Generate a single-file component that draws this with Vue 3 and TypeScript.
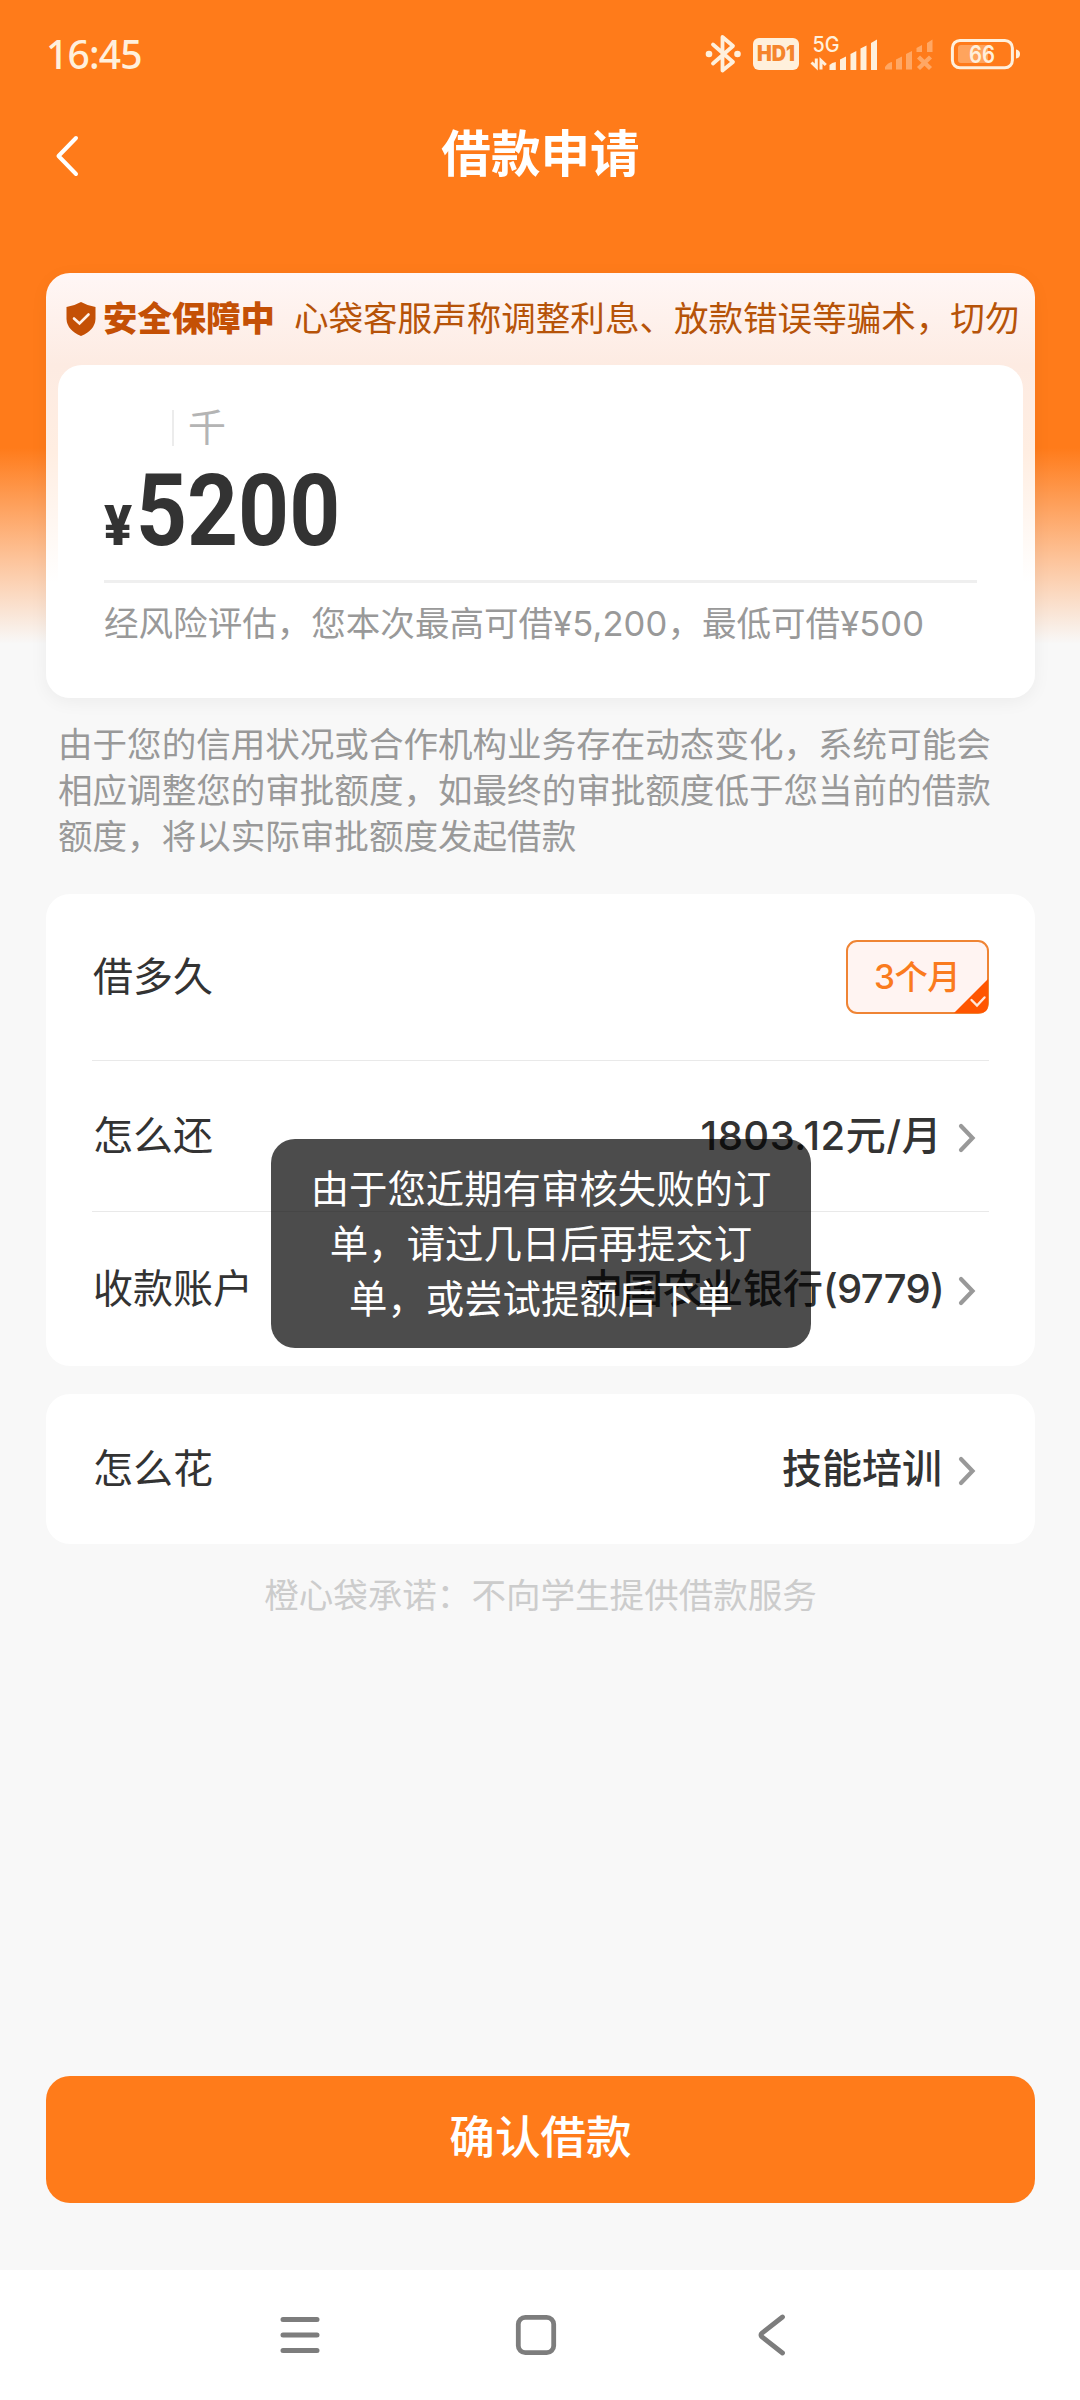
<script setup lang="ts">
interface Row {
  label: string
  value: string
  detail?: string
}

const tip =
  '由于您的信用状况或合作机构业务存在动态变化，系统可能会相应调整您的审批额度，如最终的审批额度低于您当前的借款额度，将以实际审批额度发起借款'
const loanRows: Row[] = [
  { label: '怎么还', value: '1803.12元/月' },
  { label: '收款账户', value: '中国农业银行', detail: '(9779)' },
]
const toastLines: string[] = ['由于您近期有审核失败的订', '单，请过几日后再提交订', '单，或尝试提额后下单']
</script>

<template>
  <div class="screen">
    <header class="status">
      <span class="clock">16:45</span>
      <svg class="status-icons" width="330" height="50" viewBox="700 30 330 50">
        <g fill="none" stroke="#fff0dc" stroke-width="3.8" stroke-linejoin="round" stroke-linecap="round">
          <path d="M713 44.5 L733 62 L722.5 70.5 V37 L733 46 L713 63.5" />
        </g>
        <circle cx="709" cy="54" r="3.3" fill="#fff0dc" />
        <circle cx="737.5" cy="54" r="3.3" fill="#fff0dc" />
        <rect x="753" y="38" width="46" height="32" rx="6" fill="#fff0dc" />
        <text x="776" y="61.3" class="hd" text-anchor="middle" textLength="38" lengthAdjust="spacingAndGlyphs">HD1</text>
        <text x="812.5" y="52" class="net" textLength="27" lengthAdjust="spacingAndGlyphs">5G</text>
        <g fill="none" stroke="#fff0dc" stroke-width="3">
          <path d="M816.3 58.5 V67 L811.5 62.5" />
          <path d="M821 69.5 V60.5 L825.8 65" />
        </g>
        <g fill="#fff0dc">
          <path d="M829.5 65 Q832 62.5 835.8 62 V70 H829.5Z" />
          <path d="M840 59.5 L846 56.5 V70 H840Z" />
          <path d="M850.5 54 L856.3 51 V70 H850.5Z" />
          <path d="M860.5 48.5 L866.5 45.5 V70 H860.5Z" />
          <path d="M871 43 L877 39.5 V70 H871Z" />
        </g>
        <g fill="#fff0dc" opacity=".38">
          <path d="M885 67 Q888 62.5 892 62 V69.5 H885Z" />
          <path d="M896 59.5 L902 56.5 V69.5 H896Z" />
          <path d="M906 54 L912 51 V69.5 H906Z" />
          <path d="M916.5 48 L922 45 V52 H916.5Z" />
          <path d="M927 43 L932.5 39.5 V52 H927Z" />
          <path d="M918.5 57 L930.5 68.5 M930.5 57 L918.5 68.5" stroke="#fff0dc" stroke-width="4.4" />
        </g>
        <rect x="952.4" y="40.4" width="60" height="27.4" rx="7.5" fill="none" stroke="#fff0dc" stroke-width="3" />
        <path d="M961 45 H988 V63 H961 Q958 63 958 60 V48 Q958 45 961 45Z" fill="#fff0dc" opacity=".35" />
        <path d="M1016 49.5 Q1020 50 1020 54 Q1020 58 1016 58.5Z" fill="#fff0dc" />
        <text x="982" y="63" class="battery" text-anchor="middle" textLength="26" lengthAdjust="spacingAndGlyphs">66</text>
      </svg>
    </header>

    <nav class="navbar">
      <svg class="back" width="24" height="42" viewBox="0 0 24 42">
        <path d="M21 3 L3.5 21 L21 39" fill="none" stroke="#fff" stroke-width="4" stroke-linecap="round" stroke-linejoin="round" />
      </svg>
      <h1>借款申请</h1>
    </nav>

    <main>
      <section class="quota">
        <div class="safety">
          <svg width="30" height="36" viewBox="0 0 30 36">
            <path d="M15 1 Q22 5 29.5 6 V18 Q29 29 15 35 Q1 29 .5 18 V6 Q8 5 15 1Z" fill="#c45005" />
            <path d="M8 17.5 L13.5 22.5 L22.5 13.5" fill="none" stroke="#fff1e8" stroke-width="2.6" stroke-linecap="round" />
          </svg>
          <strong>安全保障中</strong>
          <span class="marquee">心袋客服声称调整利息、放款错误等骗术，切勿</span>
        </div>
        <div class="amount-card">
          <div class="unit"><i></i><span>千</span></div>
          <div class="amount"><span class="yen">¥</span><span class="digits">5200</span></div>
          <p class="range">经风险评估，您本次最高可借<span>¥5,200</span>，最低可借<span>¥500</span></p>
        </div>
      </section>

      <p class="tip">{{ tip }}</p>

      <section class="card">
        <div class="row term">
          <span class="label">借多久</span>
          <div class="chip">
            3个月
            <svg class="corner" width="34" height="34" viewBox="0 0 34 34">
              <path d="M34 0 V26 Q34 34 26 34 H0Z" fill="#ff5500" />
              <path d="M17.5 21 L23 26.5 L30.5 18.5" fill="none" stroke="#ffe6d8" stroke-width="2.4" stroke-linecap="round" />
            </svg>
          </div>
        </div>
        <div v-for="row in loanRows" :key="row.label" class="row">
          <span class="label">{{ row.label }}</span>
          <span class="value" :class="{ plain: !row.detail }">{{ row.value }}<span v-if="row.detail" class="detail">{{ row.detail }}</span></span>
          <svg class="chevron" width="18" height="30" viewBox="0 0 18 30">
            <path d="M3 3 L14.5 15 L3 27" fill="none" stroke="#999" stroke-width="4.2" stroke-linecap="round" />
          </svg>
        </div>
      </section>

      <section class="card usage">
        <div class="row">
          <span class="label">怎么花</span>
          <span class="value">技能培训</span>
          <svg class="chevron" width="18" height="30" viewBox="0 0 18 30">
            <path d="M3 3 L14.5 15 L3 27" fill="none" stroke="#999" stroke-width="4.2" stroke-linecap="round" />
          </svg>
        </div>
      </section>

      <p class="promise">橙心袋承诺：不向学生提供借款服务</p>
    </main>

    <button class="submit" type="button">确认借款</button>

    <footer class="system-nav">
      <svg width="40" height="42" viewBox="0 0 40 42">
        <path d="M3 5.5 H37 M3 21 H37 M3 36.5 H37" stroke="#7d7d7d" stroke-width="5" stroke-linecap="round" />
      </svg>
      <svg width="42" height="42" viewBox="0 0 42 42">
        <rect x="3.3" y="3.3" width="35.4" height="35.4" rx="7" fill="none" stroke="#7d7d7d" stroke-width="4.8" />
      </svg>
      <svg width="30" height="42" viewBox="0 0 30 42">
        <path d="M25.5 3 L5 19 Q2.8 21 5 23 L25.5 39" fill="none" stroke="#7d7d7d" stroke-width="4.8" stroke-linecap="round" />
      </svg>
    </footer>

    <div class="toast" role="status">
      <div v-for="line in toastLines" :key="line">{{ line }}</div>
    </div>
  </div>
</template>

<style>
body {
  margin: 0;
  background: #f8f8f8;
}
</style>

<style scoped>
* {
  box-sizing: border-box;
}
.screen {
  position: relative;
  display: flex;
  flex-direction: column;
  width: 1080px;
  height: 2400px;
  overflow: hidden;
  background: linear-gradient(#ff7b1a 0, #ff7b1a 448px, #fdc49b 560px, #f8f8f8 644px);
  font-family: Inter, 'Noto Sans CJK SC', sans-serif;
  color: #333;
}
h1,
p {
  margin: 0;
  font-weight: 400;
}
svg {
  display: block;
  flex: none;
}
.status {
  display: flex;
  justify-content: space-between;
  height: 108px;
  padding: 30px 50px 0 46px;
}
.clock {
  height: 50px;
  font: 500 39px/48px 'Noto Sans', Inter, sans-serif;
  letter-spacing: -0.8px;
  color: #fff0dc;
}
.hd {
  font: 900 21px Inter, sans-serif;
  fill: #f5842c;
}
.net {
  font: 500 21px Inter, sans-serif;
  fill: #fff0dc;
}
.battery {
  font: 600 24px Inter, sans-serif;
  fill: #fff0dc;
}
.navbar {
  display: flex;
  align-items: center;
  height: 94px;
  padding: 0 78px 0 55px;
}
.back {
  margin-top: 1px;
}
h1 {
  flex: 1;
  padding-bottom: 2px;
  text-align: center;
  font-size: 49.6px;
  line-height: 60px;
  font-weight: 700;
  color: #fff;
}
main {
  display: flex;
  flex-direction: column;
  padding: 71px 45px 0 46px;
}
.quota {
  height: 425px;
  padding: 0 12px;
  border-radius: 24px;
  background: linear-gradient(#fff7f6 0, #fdebe2 92px, #ffeee2 180px, #fff 310px);
  box-shadow: 0 4px 18px rgba(0, 0, 0, 0.05);
}
.safety {
  display: flex;
  align-items: center;
  height: 92px;
  padding-left: 8px;
  font-size: 34.56px;
  line-height: 46px;
}
.safety strong {
  margin-left: 7px;
  font-weight: 900;
  font-size: 34.4px;
  color: #c45005;
}
.marquee {
  flex: 1;
  margin-left: 19px;
  white-space: nowrap;
  color: #b65308;
}
.amount-card {
  height: 333px;
  padding: 34px 46px 0;
  border-radius: 24px;
  background: #fff;
}
.unit {
  display: flex;
  align-items: center;
  height: 58px;
  padding-left: 68px;
  font-size: 38px;
  line-height: 56px;
  color: #b4b4b4;
}
.unit span {
  padding-bottom: 2px;
}
.unit i {
  width: 2px;
  height: 36px;
  margin-right: 14px;
  background: #ececec;
}
.amount {
  display: flex;
  align-items: baseline;
  height: 126px;
  border-bottom: 3px solid #efefef;
  font-family: Roboto, sans-serif;
  font-weight: 700;
  line-height: 107px;
}
.yen {
  width: 32px;
  font-size: 56px;
  font-weight: 900;
  transform: scaleX(0.93);
  transform-origin: left;
}
.digits {
  font-size: 100px;
  transform: scaleX(0.89);
  transform-origin: left;
}
.range {
  padding-top: 18px;
  font-size: 34.56px;
  line-height: 46px;
  white-space: nowrap;
  color: #999;
}
.range span {
  letter-spacing: 0.1px;
}
.tip {
  width: 940px;
  margin: 24px 0 0 12px;
  font-size: 34.56px;
  line-height: 46px;
  color: #999;
}
.card {
  margin-top: 34px;
  padding: 0 46px;
  border-radius: 24px;
  background: #fff;
}
.row {
  display: flex;
  align-items: center;
  height: 151px;
  font-size: 40px;
}
.row + .row {
  border-top: 1px solid #e9e9e9;
}
.row:last-child {
  height: 155px;
}
.row.term {
  height: 166px;
}
.label {
  flex: 1;
  padding-left: 1px;
  padding-bottom: 7px;
}
.value {
  padding-bottom: 7px;
  font-weight: 500;
  white-space: nowrap;
}
.value.plain {
  letter-spacing: 0.5px;
}
.detail {
  margin-right: -2px;
  letter-spacing: -0.7px;
}
.chevron {
  margin: 4px 13px 0 16px;
}
.chip {
  position: relative;
  width: 143px;
  height: 74px;
  padding-left: 26px;
  border: 2px solid #ef8434;
  border-radius: 11px;
  background: #fff4f2;
  font-size: 33.4px;
  line-height: 70px;
  letter-spacing: -0.5px;
  font-weight: 500;
  color: #fa7b1e;
}
.corner {
  position: absolute;
  right: -1px;
  bottom: -1px;
}
.card.usage {
  margin-top: 28px;
}
.usage .row:last-child {
  height: 150px;
}
.promise {
  margin-top: 29px;
  text-align: center;
  font-size: 34.56px;
  line-height: 46px;
  color: #ccc;
}
.submit {
  height: 127px;
  margin: auto 45px 67px 46px;
  padding: 0 0 4px;
  border: 0;
  border-radius: 24px;
  background: #ff7b1a;
  font: 500 45.6px/60px Inter, 'Noto Sans CJK SC', sans-serif;
  color: #fff;
}
.system-nav {
  display: flex;
  align-items: center;
  height: 130px;
  padding-left: 280px;
  background: #fff;
}
.system-nav svg:nth-child(2) {
  margin-left: 195px;
}
.system-nav svg:nth-child(3) {
  margin-left: 200px;
}
.toast {
  position: absolute;
  left: 271px;
  top: 1139px;
  width: 540px;
  height: 209px;
  padding-top: 23px;
  border-radius: 24px;
  background: rgba(0, 0, 0, 0.7);
  font-size: 38.4px;
  line-height: 55px;
  text-align: center;
  white-space: nowrap;
  color: #fff;
}
</style>
